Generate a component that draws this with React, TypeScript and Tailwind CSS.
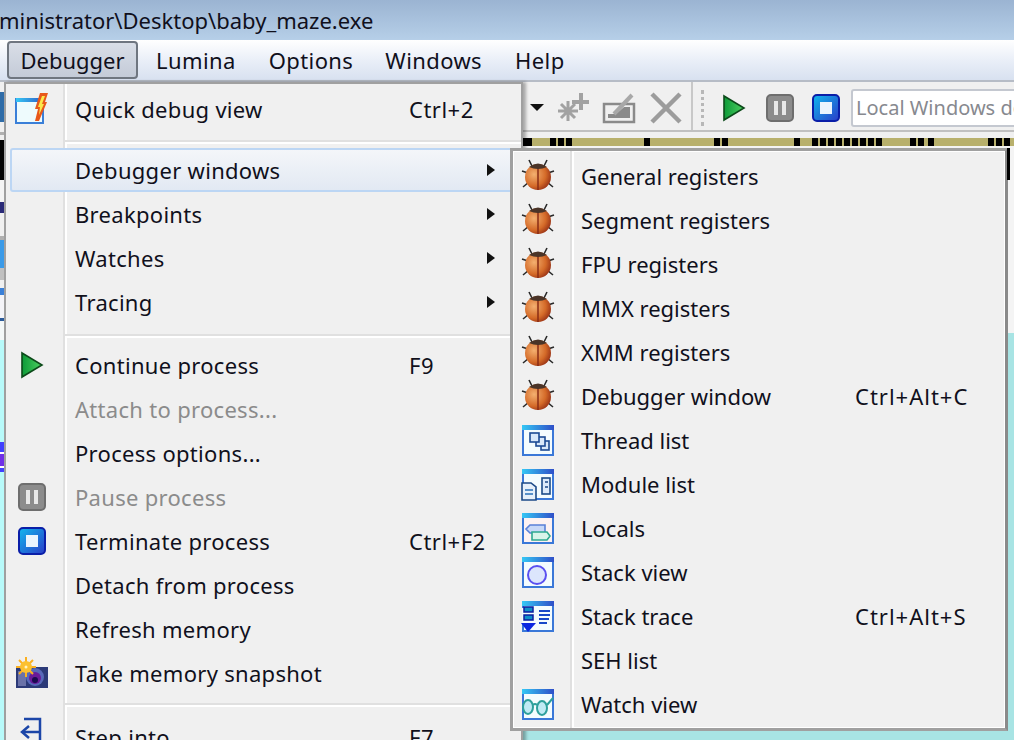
const font = "font-['Noto_Sans','Open_Sans',sans-serif]";

const leftMenu: any[] = [
  { label: "Quick debug view", shortcut: "Ctrl+2", icon: <QuickIcon /> },
  { sep: 17, pad: 5 },
  { label: "Debugger windows", arrow: true, active: true },
  { label: "Breakpoints", arrow: true },
  { label: "Watches", arrow: true },
  { label: "Tracing", arrow: true },
  { sep: 19, pad: 4 },
  { label: "Continue process", shortcut: "F9", icon: <PlayIcon /> },
  { label: "Attach to process...", disabled: true },
  { label: "Process options..." },
  { label: "Pause process", disabled: true, icon: <PauseIcon /> },
  { label: "Terminate process", shortcut: "Ctrl+F2", icon: <StopIcon /> },
  { label: "Detach from process" },
  { label: "Refresh memory" },
  { label: "Take memory snapshot", icon: <CameraIcon /> },
  { sep: 20 },
  { label: "Step into", shortcut: "F7", icon: <StepIcon /> },
];

const subMenu: any[] = [
  { label: "General registers", icon: <BugIcon /> },
  { label: "Segment registers", icon: <BugIcon /> },
  { label: "FPU registers", icon: <BugIcon /> },
  { label: "MMX registers", icon: <BugIcon /> },
  { label: "XMM registers", icon: <BugIcon /> },
  { label: "Debugger window", shortcut: "Ctrl+Alt+C", icon: <BugIcon /> },
  { label: "Thread list", icon: <WindowIcon kind="thread" /> },
  { label: "Module list", icon: <WindowIcon kind="module" /> },
  { label: "Locals", icon: <WindowIcon kind="locals" /> },
  { label: "Stack view", icon: <WindowIcon kind="stack" /> },
  { label: "Stack trace", shortcut: "Ctrl+Alt+S", icon: <WindowIcon kind="trace" /> },
  { label: "SEH list" },
  { label: "Watch view", icon: <WindowIcon kind="watch" /> },
];

// blocks of the window behind the menu, seen as a sliver on the far left
const sliver = [
  { h: 10, c: "bg-[#f0f0f0]" },
  { h: 30, c: "bg-[#2f6ca8]" },
  { h: 10, c: "bg-[#f0f0f0]" },
  { h: 3, c: "bg-[#b0b0b0]" },
  { h: 5, c: "bg-[#f0f0f0]" },
  { h: 40, c: "bg-black" },
  { h: 22, c: "bg-[#f4f4f4]" },
  { h: 11, c: "bg-[#2a2a78]" },
  { h: 23, c: "bg-[#f0f0f0]" },
  { h: 4, c: "bg-[#b0b0b0]" },
  { h: 28, c: "bg-[#3a9ae8]" },
  { h: 12, c: "bg-[#c0c0c0]" },
  { h: 8, c: "bg-[#f0f0f0]" },
  { h: 7, c: "bg-[#3a80d8]" },
  { h: 23, c: "bg-[#f4f4f8]" },
  { h: 3, c: "bg-[#2a5a9a]" },
  { h: 19, c: "bg-[#f4f8f8]" },
  { h: 102, c: "bg-[#b8fafa]" },
  { h: 10, c: "bg-[#4040ff]" },
  { h: 2, c: "bg-white" },
  { h: 12, c: "bg-[#7030e8]" },
  { h: 2, c: "bg-white" },
  { h: 4, c: "bg-[#4040ff]" },
];

function QuickIcon() {
  return (
    <svg width="34" height="34" viewBox="0 0 34 34">
      <defs>
        <linearGradient id="qbar" x1="0" x2="1" y1="0" y2="0">
          <stop offset="0" stopColor="#35c8f5" />
          <stop offset="1" stopColor="#2f5fc8" />
        </linearGradient>
      </defs>
      <rect x="1" y="7" width="27" height="24" fill="#eefbfd" stroke="#3a7fd8" strokeWidth="2" />
      <rect x="1" y="6" width="27" height="4" fill="url(#qbar)" />
      <path d="M25 1 L33 1 L30 10 L32 10 L24 29 L20 29 L23 17 L20 17 Z" fill="#e8581a" />
      <path d="M27 4 L30 4 L27 12 L29 12 L24 23 L25 15 L23 15 Z" fill="#fbe84a" />
    </svg>
  );
}

function PlayIcon() {
  return (
    <svg width="24" height="28" viewBox="0 0 24 28">
      <defs>
        <linearGradient id="play" x1="0" x2="1" y1="0" y2="0">
          <stop offset="0" stopColor="#0d9a38" />
          <stop offset="1" stopColor="#4cd060" />
        </linearGradient>
      </defs>
      <path d="M2 2 L22 14 L2 26 Z" fill="url(#play)" stroke="#0c4a1a" strokeWidth="1.6" />
    </svg>
  );
}

function PauseIcon() {
  return (
    <svg width="28" height="28" viewBox="0 0 28 28">
      <rect x="1" y="1" width="26" height="26" rx="4" fill="#8c8c8c" stroke="#6e6e6e" strokeWidth="2" />
      <rect x="8" y="7" width="4" height="14" fill="#e8e8e8" />
      <rect x="16" y="7" width="4" height="14" fill="#e8e8e8" />
    </svg>
  );
}

function StopIcon() {
  return (
    <svg width="28" height="28" viewBox="0 0 28 28">
      <defs>
        <linearGradient id="stop" x1="0" x2="1" y1="0" y2="1">
          <stop offset="0" stopColor="#10b8ee" />
          <stop offset="1" stopColor="#2a3cc8" />
        </linearGradient>
      </defs>
      <rect x="1" y="1" width="26" height="26" rx="4" fill="url(#stop)" stroke="#0a1ea8" strokeWidth="2" />
      <rect x="8" y="8" width="12" height="12" fill="#eaf4fe" />
    </svg>
  );
}

function CameraIcon() {
  return (
    <svg width="34" height="34" viewBox="0 0 34 34">
      <rect x="1" y="11" width="32" height="21" fill="#2c3a78" />
      <rect x="3" y="15" width="8" height="15" fill="#6a72a8" />
      <circle cx="20" cy="21" r="9" fill="#5868b8" />
      <circle cx="20" cy="22" r="6" fill="#6a1a98" />
      <circle cx="20" cy="24" r="3" fill="#1a0a50" />
      <g stroke="#fbb020" strokeWidth="2">
        <path d="M11 1 V21 M1 11 H21 M4 4 L18 18 M18 4 L4 18" />
      </g>
      <circle cx="11" cy="11" r="6" fill="#fcc030" />
      <circle cx="11" cy="11" r="1.5" fill="#fff4c0" />
    </svg>
  );
}

function StepIcon() {
  return (
    <svg width="26" height="40" viewBox="0 0 26 40" fill="none" stroke="#1c46a8" strokeWidth="2.5">
      <path d="M5 2 H21 V26" />
      <path d="M4 15 H21" />
      <path d="M10 9 L3 15 L10 21" />
    </svg>
  );
}

function BugIcon() {
  return (
    <svg className="-mt-[2px]" width="34" height="32" viewBox="0 0 34 32">
      <defs>
        <radialGradient id="shell" cx="0.35" cy="0.4" r="0.75">
          <stop offset="0" stopColor="#f4b070" />
          <stop offset="0.6" stopColor="#d46a28" />
          <stop offset="1" stopColor="#8a2410" />
        </radialGradient>
      </defs>
      <g stroke="#2a2a2a" strokeWidth="1.6">
        <path d="M8 1 L11 7 M26 1 L23 7 M1 12 L7 14 M33 12 L27 14 M2 28 L8 23 M32 28 L26 23" />
      </g>
      <ellipse cx="17" cy="18" rx="13" ry="13" fill="url(#shell)" />
      <path d="M17 9 V31" stroke="#8a2c14" strokeWidth="1.5" />
      <path d="M8 8 Q17 1 26 8 Q17 12 8 8 Z" fill="#4a3428" />
    </svg>
  );
}

function WindowIcon({ kind }: { kind: string }) {
  const gid = "bar-" + kind;
  return (
    <svg width="34" height="34" viewBox="0 0 34 34">
      <defs>
        <linearGradient id={gid} x1="0" x2="1" y1="0" y2="0">
          <stop offset="0" stopColor="#35c8f5" />
          <stop offset="1" stopColor="#2f4fc8" />
        </linearGradient>
      </defs>
      <rect x="2" y="3" width="30" height="29" fill={kind === "locals" ? "#fdf2f2" : "#f4fcfe"} stroke="#3a78d8" strokeWidth="2" />
      <rect x="1" y="2" width="32" height="5" fill={`url(#${gid})`} />
      {kind === "thread" && (
        <g fill="#d8e8fa" stroke="#1c4a94" strokeWidth="1.6">
          <rect x="20" y="18" width="8" height="9" />
          <rect x="15" y="14" width="9" height="9" />
          <rect x="9" y="10" width="9" height="9" />
        </g>
      )}
      {kind === "module" && (
        <g stroke="#1c4a88" strokeWidth="1.6">
          <rect x="21" y="11" width="8" height="16" fill="#dceafa" />
          <path d="M24 15 H27 M24 20 H27" />
          <path d="M1 16 H10 L15 20 V33 H1 Z" fill="#e6f0fa" />
          <path d="M4 23 H12 M4 27 H12" stroke="#2a70b8" />
        </g>
      )}
      {kind === "locals" && (
        <g strokeWidth="1.6">
          <path d="M9 14 H24 V22 H9 L5 18 Z" fill="#c8d8f8" stroke="#5a80d8" />
          <path d="M11 21 H26 L29 25 L26 29 H11 Z" fill="#d8f4ea" stroke="#2ea890" />
        </g>
      )}
      {kind === "stack" && <circle cx="16" cy="20" r="9" fill="#dce6fc" stroke="#5a50f0" strokeWidth="2" />}
      {kind === "trace" && (
        <g>
          <rect x="1" y="9" width="13" height="16" fill="#f4fcfe" />
          <rect x="3" y="8" width="9" height="5" fill="#1090c8" stroke="#0c1ea0" strokeWidth="1.5" />
          <rect x="3" y="16" width="9" height="5" fill="#1090c8" stroke="#0c1ea0" strokeWidth="1.5" />
          <path d="M0 24 H15 L7 33 Z" fill="#0c28e0" />
          <path d="M18 12 H29 M18 16 H29 M18 20 H28 M18 24 H26" stroke="#1848c8" strokeWidth="2" />
        </g>
      )}
      {kind === "watch" && (
        <g fill="#bfeaf4" stroke="#2ea09c" strokeWidth="2">
          <ellipse cx="7" cy="20" rx="5" ry="7" />
          <ellipse cx="21" cy="21" rx="5" ry="7" />
          <path d="M12 18 Q14 16 16 18 M26 18 L32 11" fill="none" />
        </g>
      )}
    </svg>
  );
}

type ListProps = {
  items: any[];
  cell: string;
  textW: string;
  gutter: string;
  labelTrack: string;
  keyTrack: string;
};

function MenuList({ items, cell, textW, gutter, labelTrack, keyTrack }: ListProps) {
  return (
    <div className="flex flex-col">
      {items.map((item, i) =>
        item.sep ? (
          <div key={i} style={{ height: item.sep, paddingTop: item.pad || 0 }} className="flex flex-col justify-center">
            <div className={`${gutter} h-[2px] bg-[#e0e0e0]`} />
            <div className={`${gutter} h-[2px] bg-white`} />
          </div>
        ) : (
          <div
            key={i}
            className={`flex items-center h-[44px] ${item.disabled ? "text-[#8b8b8b]" : "text-[#10101c]"} ${
              item.active ? "rounded-[3px] border-2 border-[#bcd6f4] bg-gradient-to-b from-[#f4f6f9] to-[#e2e9f3] mx-[4px]" : ""
            }`}
          >
            <div className={`${item.active ? "w-[45px] mr-[18px]" : cell} shrink-0 flex items-center justify-center`}>{item.icon}</div>
            <span className={`${textW} ${labelTrack} shrink-0 whitespace-nowrap`}>{item.label}</span>
            {item.shortcut && <span className={`${keyTrack} whitespace-nowrap`}>{item.shortcut}</span>}
            {item.arrow && (
              <div
                className={`ml-auto ${item.active ? "mr-[20px]" : "mr-[26px]"} w-0 h-0 border-y-[6px] border-y-transparent border-l-[8px] border-l-[#111]`}
              />
            )}
          </div>
        )
      )}
    </div>
  );
}

const dashes = [523, 526, 550, 558, 566, 644, 714, 722, 794, 812, 820, 828, 836, 844, 852, 860, 868, 876, 910, 918, 928, 988, 996, 1004];

export default function App() {
  return (
    <div className={`relative w-[1014px] h-[740px] overflow-hidden bg-[#f0f0f0] ${font} text-[22px]`}>
      {/* title bar */}
      <div className="h-10 bg-gradient-to-b from-[#9bb4d2] to-[#b6cfe8] flex items-center overflow-hidden">
        <span className="text-[#10101c] whitespace-nowrap -ml-[1px]">ministrator\Desktop\baby_maze.exe</span>
      </div>

      {/* menu bar */}
      <div className="h-[42px] bg-gradient-to-b from-white via-[#eaeff8] to-[#d8e1f0] border-b-2 border-[#b6bcc6] flex items-center pl-[7px] text-[#10101c] tracking-[0.4px]">
        <div className="h-[38px] w-[131px] flex items-center justify-center rounded-[4px] border-2 border-[#6f7680] bg-gradient-to-b from-[#d9dee7] to-[#c4cbd8] tracking-normal">
          Debugger
        </div>
        <span className="ml-[18px]">Lumina</span>
        <span className="ml-[33px]">Options</span>
        <span className="ml-[32px]">Windows</span>
        <span className="ml-[33px]">Help</span>
      </div>

      {/* page behind the menus */}
      <div className="flex h-[658px]">
        <div className="w-[4px] shrink-0 flex flex-col">
          {sliver.map((b, i) => (
            <div key={i} className={b.c} style={{ height: b.h }} />
          ))}
          <div className="flex-1 bg-[#b8fafa]" />
        </div>
        <div className="flex-1 flex flex-col min-w-0">
          <div className="h-[50px] flex items-center border-b-2 border-[#c0c0c0] pl-[526px] pt-[3px] shrink-0">
            <div className="shrink-0 w-0 h-0 border-x-[7px] border-x-transparent border-t-[7px] border-t-[#111]" />
            <svg className="ml-[12px] shrink-0" width="34" height="32" viewBox="0 0 34 32" fill="none" stroke="#a2a2a2" strokeWidth="3">
              <path d="M2 19 H22 M12 9 V29 M5 12 L19 26 M19 12 L5 26" />
              <path d="M16 10 H33 M25 1 V18" strokeWidth="4" />
            </svg>
            <svg className="ml-[12px] shrink-0" width="34" height="32" viewBox="0 0 34 32">
              <path d="M2 12 H32 V30 H2 Z" fill="#f0f0f0" stroke="#8a8a8a" strokeWidth="2.5" />
              <path d="M6 26 H28 V15 L22 15 L14 22 L6 22 Z" fill="#8a8a8a" />
              <path d="M12 22 L30 3" stroke="#a8a8a8" strokeWidth="4" />
            </svg>
            <svg className="ml-[14px] shrink-0" width="32" height="32" viewBox="0 0 32 32" stroke="#9c9c9c" strokeWidth="4.5">
              <path d="M2 2 L30 30 M30 2 L2 30" />
            </svg>
            <div className="ml-[9px] w-[2px] h-[48px] -mt-[3px] shrink-0 bg-[#c8c8c8]" />
            <div className="ml-[8px] h-[36px] shrink-0 border-l-[3px] border-dotted border-[#b8b8b8]" />
            <div className="ml-[18px] flex items-center shrink-0"><PlayIcon /></div>
            <div className="ml-[20px] flex items-center shrink-0"><PauseIcon /></div>
            <div className="ml-[18px] flex items-center shrink-0"><StopIcon /></div>
            <div className="ml-[11px] w-[200px] h-[38px] shrink-0 rounded-[3px] border-2 border-[#c4c8d0] bg-white pl-[3px] flex items-center text-[20px] text-[#87898f] overflow-hidden whitespace-nowrap">
              Local Windows debugger
            </div>
          </div>
          <div className="h-[6px] shrink-0" />
          <div className="relative h-2 shrink-0 bg-[#b8b06c]">
            {dashes.map((x) => (
              <div key={x} className="absolute top-0 h-2 w-[6px] bg-black" style={{ left: x - 4 }} />
            ))}
          </div>
          <div className="h-[187px] shrink-0 bg-[#f4f4f4]" />
          <div className="flex-1 bg-[#a8e4e4]" />
        </div>
      </div>

      {/* Debugger menu */}
      <div className="absolute left-[4px] top-[82px] w-[519px] h-[680px] border-2 border-[#a0a0a0] bg-[#f0f0f0] pt-[3px] shadow-[3px_0_3px_rgba(0,0,0,0.3)]">
        <div className="absolute left-[57px] top-0 bottom-0 w-[2px] bg-[#e0e0e0]" />
        <div className="absolute left-[59px] top-0 bottom-0 w-[2px] bg-white" />
        <div className="relative">
          <MenuList
            items={leftMenu}
            cell="w-[52px] mr-[17px]"
            textW="w-[334px]"
            gutter="ml-[59px]"
            labelTrack="tracking-[0.3px]"
            keyTrack="tracking-[0.5px]"
          />
        </div>
      </div>

      {/* Debugger windows submenu */}
      <div className="absolute left-[510px] top-[148px] w-[498px] h-[583px] border-[3px] border-[#a0a0a0] border-r-[#8a8a8a] bg-[#f0f0f0] pt-[3px] ring-1 ring-white ring-inset">
        <div className="absolute left-[57px] top-0 bottom-0 w-[2px] bg-[#e0e0e0]" />
        <div className="absolute left-[59px] top-0 bottom-0 w-[2px] bg-white" />
        <div className="relative">
          <MenuList
            items={subMenu}
            cell="w-[49px] mr-[19px]"
            textW="w-[274px]"
            gutter="ml-[59px]"
            labelTrack=""
            keyTrack="tracking-[1px]"
          />
        </div>
      </div>
      <div className="absolute left-[1007px] top-[148px] w-[3px] h-[32px] bg-black" />
    </div>
  );
}
